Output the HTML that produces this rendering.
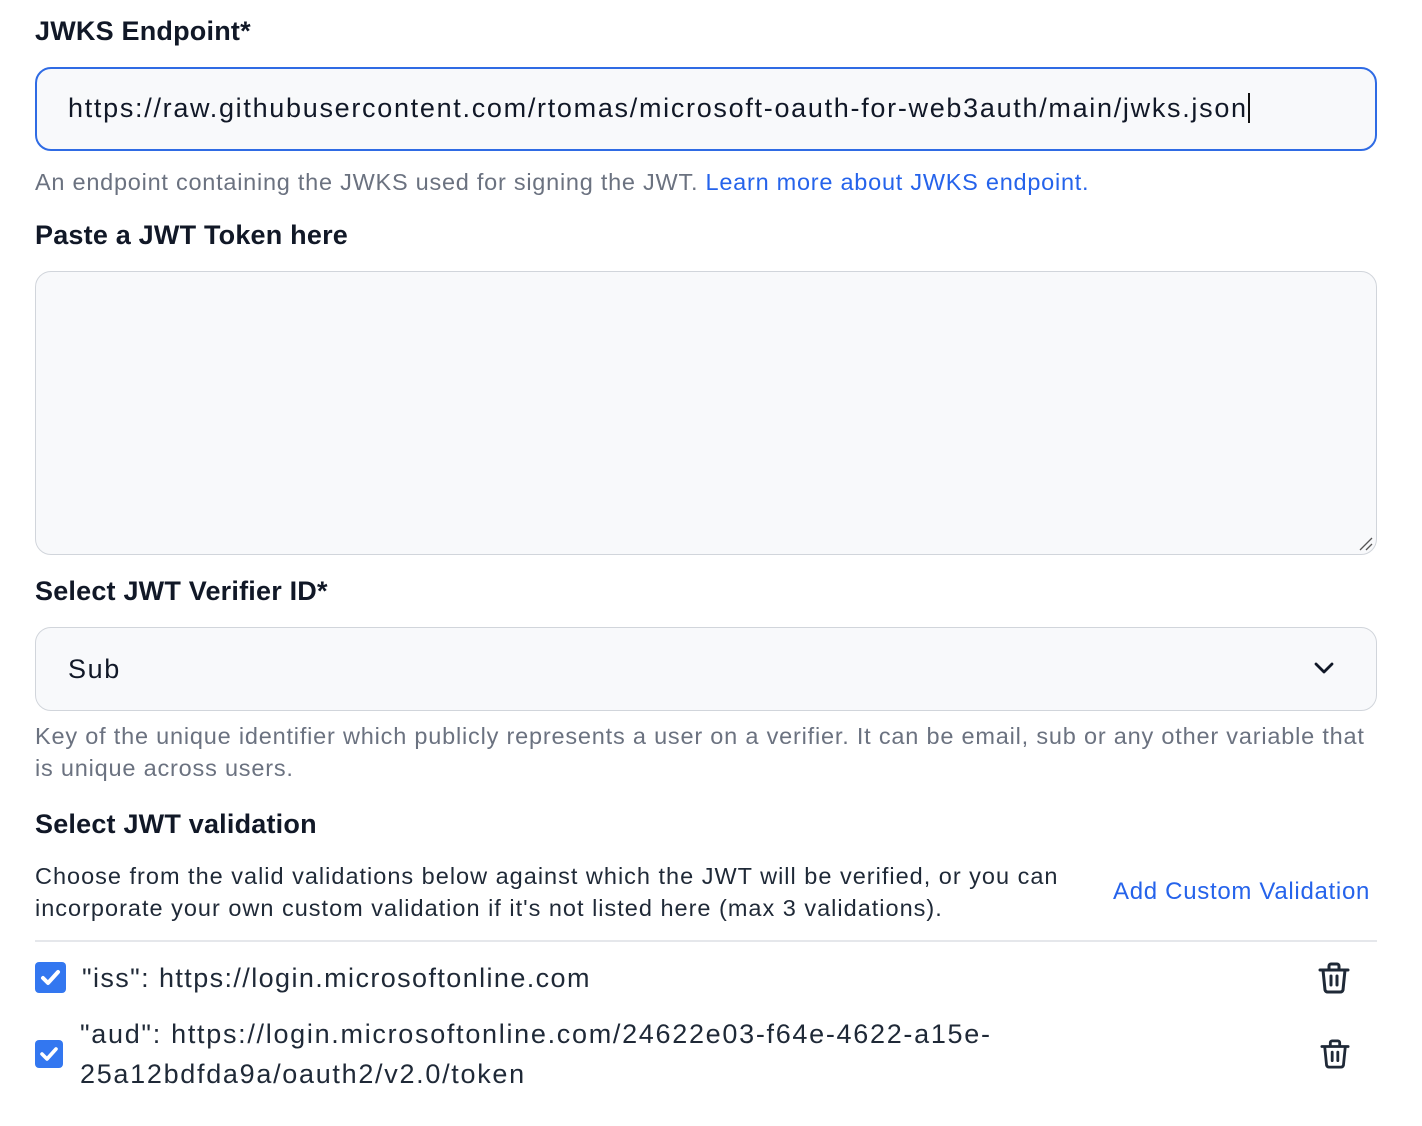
<!DOCTYPE html>
<html><head><meta charset="utf-8"><style>
body{margin:0;width:1422px;height:1126px;background:#fff;font-family:"Liberation Sans",sans-serif;color:#111827;position:relative;overflow:hidden}
.a{position:absolute;white-space:nowrap}
.lbl{font-size:27px;font-weight:700;color:#111827;letter-spacing:0.2px}
.help{font-size:23.5px;color:#6b7280;letter-spacing:0.75px}
.box{position:absolute;left:35px;width:1342px;background:#f8f9fb;border:1.5px solid #d1d5db;border-radius:16px;box-sizing:border-box}
.txt{font-size:27px;color:#1f2937;letter-spacing:1.6px}
.cb{position:absolute;background:#3377f0;border-radius:4px}
</style></head><body>
<div class="a lbl" style="left:35px;top:16px">JWKS Endpoint*</div>
<div class="box" style="top:67px;height:84px;border:2px solid #2f6be4"></div>
<div class="a txt" style="left:68px;top:93px;color:#111827;letter-spacing:1.7px">https://raw.githubusercontent.com/rtomas/microsoft-oauth-for-web3auth/main/jwks.json<span style="border-left:2px solid #111;margin-left:0px"></span></div>
<div class="a help" style="left:35px;top:169px">An endpoint containing the JWKS used for signing the JWT. <span style="color:#2563eb">Learn more about JWKS endpoint.</span></div>
<div class="a lbl" style="left:35px;top:220px">Paste a JWT Token here</div>
<div class="box" style="top:271px;height:284px"></div>
<svg class="a" style="left:1358px;top:536px" width="16" height="16"><path d="M2 14L14 2M8 14L14 8" stroke="#555" stroke-width="1.3"/></svg>
<div class="a lbl" style="left:35px;top:576px">Select JWT Verifier ID*</div>
<div class="box" style="top:627px;height:84px"></div>
<div class="a txt" style="left:68px;top:654px;color:#111827">Sub</div>
<svg class="a" style="left:1313px;top:660px" width="22" height="16"><path d="M3 4l8 8 8-8" fill="none" stroke="#111827" stroke-width="2.8" stroke-linecap="round" stroke-linejoin="round"/></svg>
<div class="a help" style="left:35px;top:720px;line-height:32px;white-space:normal;width:1345px;letter-spacing:0.8px">Key of the unique identifier which publicly represents a user on a verifier. It can be email, sub or any other variable that is unique across users.</div>
<div class="a lbl" style="left:35px;top:809px">Select JWT validation</div>
<div class="a" style="left:35px;top:860px;font-size:23.5px;line-height:32px;color:#1f2937;white-space:normal;width:1060px;letter-spacing:1px">Choose from the valid validations below against which the JWT will be verified, or you can incorporate your own custom validation if it's not listed here (max 3 validations).</div>
<div class="a" style="left:1113px;top:878px;font-size:24px;color:#2563eb;letter-spacing:0.7px">Add Custom Validation</div>
<div class="a" style="left:35px;top:940px;width:1342px;height:2px;background:#e5e7eb"></div>
<div class="cb" style="left:35px;top:962px;width:31px;height:31px"></div>
<svg class="a" style="left:35px;top:962px" width="31" height="31"><path d="M8 16l5 5 10-11" fill="none" stroke="#fff" stroke-width="4" stroke-linecap="round" stroke-linejoin="round"/></svg>
<div class="a txt" style="left:82px;top:963px;letter-spacing:1.4px">"iss": https://login.microsoftonline.com</div>
<div class="cb" style="left:35px;top:1040px;width:28px;height:28px"></div>
<svg class="a" style="left:35px;top:1040px" width="28" height="28"><path d="M7 14l5 5 9-10" fill="none" stroke="#fff" stroke-width="3.6" stroke-linecap="round" stroke-linejoin="round"/></svg>
<div class="a txt" style="left:80px;top:1014px;line-height:40px;letter-spacing:1.7px">"aud": https://login.microsoftonline.com/24622e03-f64e-4622-a15e-<br>25a12bdfda9a/oauth2/v2.0/token</div>
<svg class="a" style="left:1318px;top:961px" width="32" height="34" viewBox="0 0 32 34"><g fill="none" stroke="#1f2937" stroke-width="3" stroke-linecap="round" stroke-linejoin="round"><path d="M2 9h28M11 9V5a2 2 0 0 1 2-2h6a2 2 0 0 1 2 2v4M5 9l2 20a3 3 0 0 0 3 2h12a3 3 0 0 0 3-2l2-20M13 15v9M19 15v9"/></g></svg>
<svg class="a" style="left:1320px;top:1038px" width="30" height="32" viewBox="0 0 32 34"><g fill="none" stroke="#1f2937" stroke-width="3" stroke-linecap="round" stroke-linejoin="round"><path d="M2 9h28M11 9V5a2 2 0 0 1 2-2h6a2 2 0 0 1 2 2v4M5 9l2 20a3 3 0 0 0 3 2h12a3 3 0 0 0 3-2l2-20M13 15v9M19 15v9"/></g></svg>
</body></html>
